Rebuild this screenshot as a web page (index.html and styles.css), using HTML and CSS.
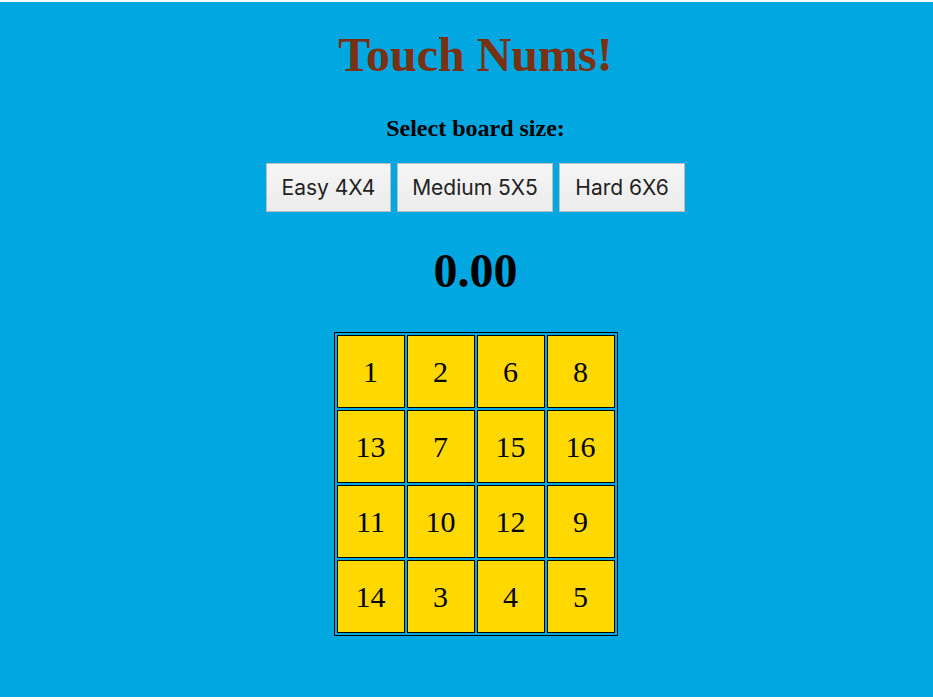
FILE: index.html
```html
<!DOCTYPE html>
<html>
<head>
<meta charset="utf-8">
<link rel="stylesheet" href="styles.css">
</head>
<body>
<div class="page">
  <div class="wrap">
    <h1 class="title">Touch Nums!</h1>
    <div class="label">Select board size:</div>
    <div class="buttons">
      <button class="btn btn-easy">Easy 4X4</button>
      <button class="btn btn-medium">Medium 5X5</button>
      <button class="btn btn-hard">Hard 6X6</button>
    </div>
    <div class="timer">0.00</div>
    <table class="board">
      <tr><td>1</td><td>2</td><td>6</td><td>8</td></tr>
      <tr><td>13</td><td>7</td><td>15</td><td>16</td></tr>
      <tr><td>11</td><td>10</td><td>12</td><td>9</td></tr>
      <tr><td>14</td><td>3</td><td>4</td><td>5</td></tr>
    </table>
  </div>
</div>
</body>
</html>
```
FILE: styles.css
```css
html { background: #ffffff; }
body {
  margin: 2px 0 0 0;
  font-family: "Liberation Serif", "Times New Roman", serif;
}
.page {
  background: #00a7e0;
  height: 695px;
  overflow: hidden;
}
.wrap {
  margin-left: 18px;
  display: flex;
  flex-direction: column;
  align-items: center;
}
.title {
  margin: 26px 0 0 0;
  font-size: 48px;
  line-height: 54px;
  font-weight: bold;
  color: #7a3112;
}
.label {
  margin-top: 33px;
  font-size: 24px;
  line-height: 27px;
  font-weight: bold;
  color: #000;
}
.buttons {
  margin-top: 21px;
  display: flex;
  gap: 6px;
}
.btn {
  height: 49px;
  border: 1px solid #bdbdbd;
  background: linear-gradient(#f5f5f5, #ececec);
  font-family: Inter, "Liberation Sans", sans-serif;
  font-size: 21px;
  color: #222;
  padding: 0;
  border-radius: 0;
}
.btn-easy { width: 125px; }
.btn-medium { width: 156px; }
.btn-hard { width: 126px; }
.timer {
  margin-top: 32px;
  font-size: 48px;
  line-height: 54px;
  font-weight: bold;
  color: #000;
}
.board {
  margin-top: 34px;
  border: 1px solid #000;
  border-spacing: 2px;
}
.board td {
  width: 66px;
  height: 71px;
  padding: 0;
  border: 1px solid #000;
  background: #ffd800;
  text-align: center;
  vertical-align: middle;
  font-size: 30px;
  color: #000;
}
```
